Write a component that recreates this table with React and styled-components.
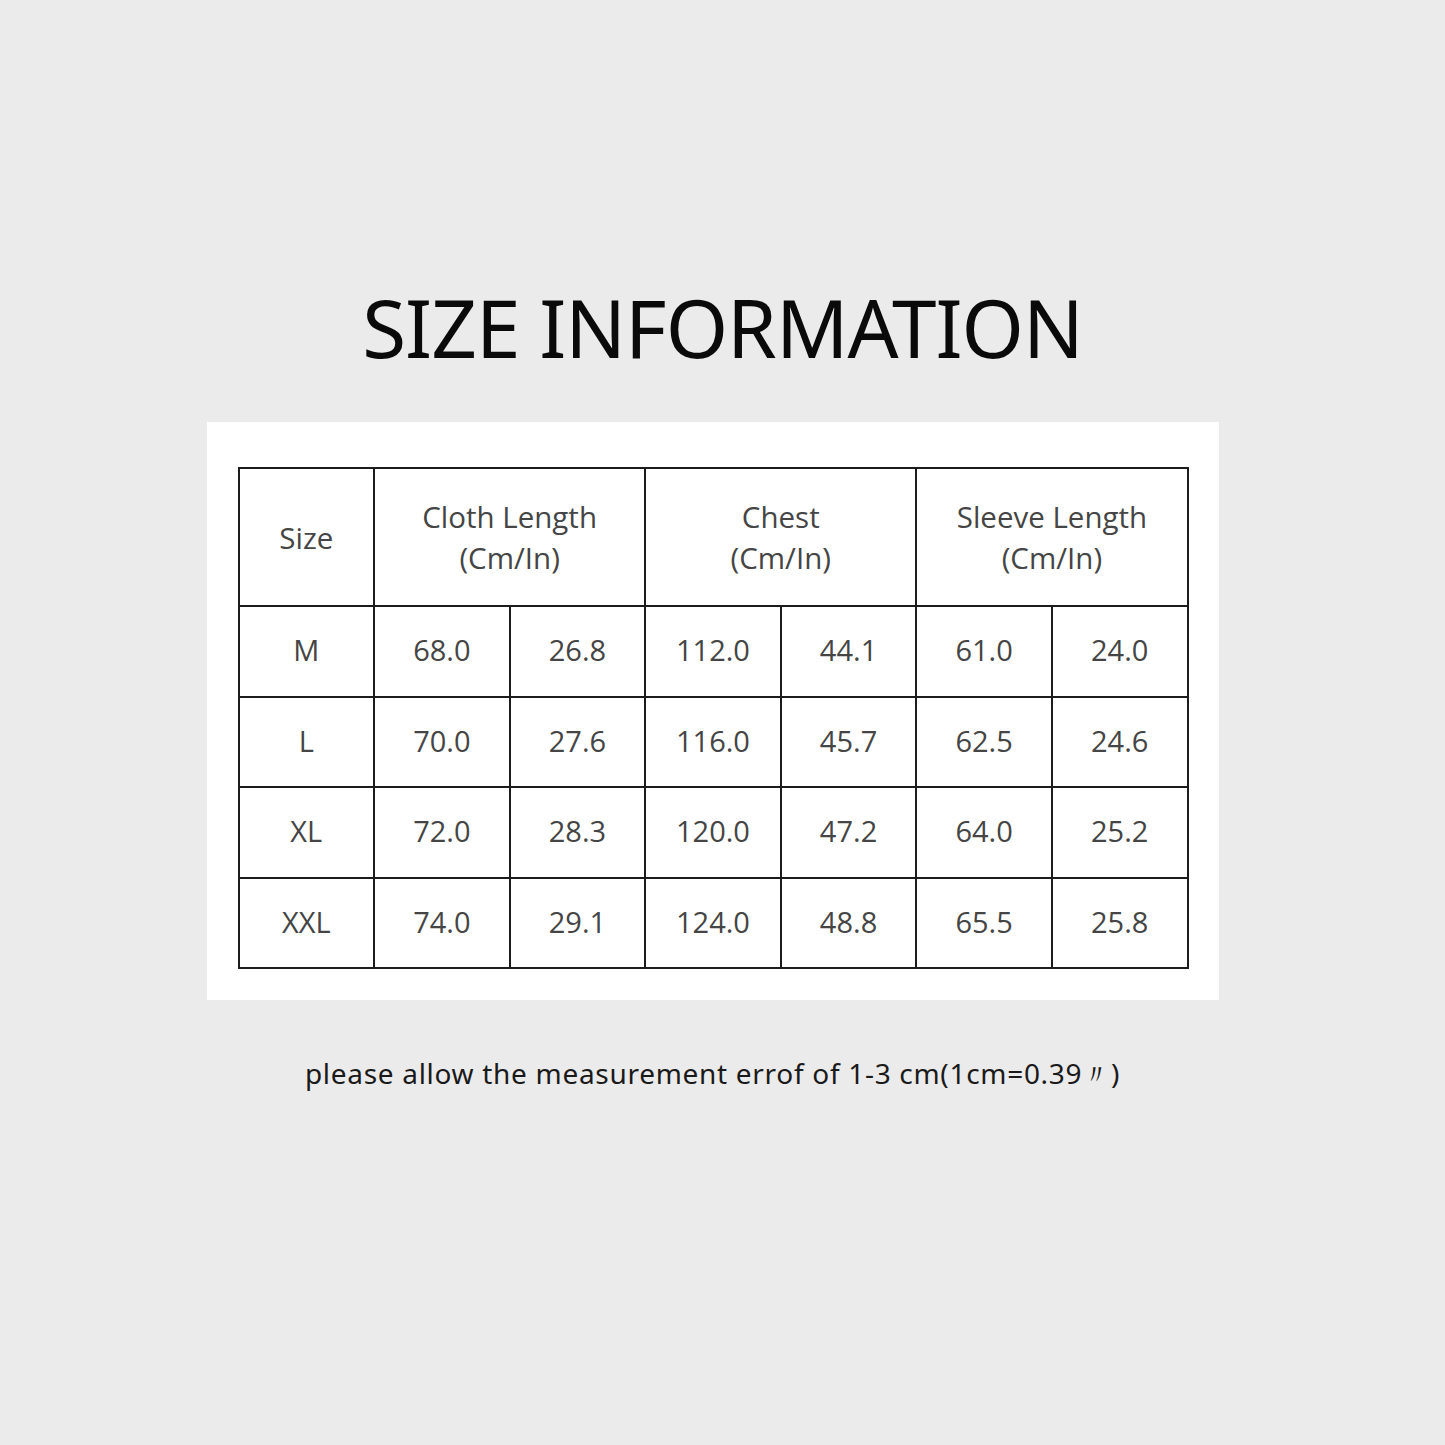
import React from 'react';
import styled, { createGlobalStyle } from 'styled-components';

const GlobalStyle = createGlobalStyle`
	html, body {
		margin: 0;
		padding: 0;
		background: #ebebeb;
	}
`;

const Page = styled.div`
	width: 1445px;
	height: 1445px;
	display: flex;
	flex-direction: column;
	align-items: center;
	box-sizing: border-box;
	padding-top: 287px;
	font-family: 'Noto Sans', 'Open Sans', sans-serif;
`;

const Title = styled.h1`
	margin: 0;
	font-family: 'Noto Sans', sans-serif;
	font-weight: 400;
	font-size: 80px;
	line-height: 80px;
	color: #0a0a0a;
	letter-spacing: -1px;
	white-space: nowrap;
`;

const Panel = styled.div`
	margin: 55px 20px 0 0;
	width: 1012px;
	background: #fff;
	box-sizing: border-box;
	padding: 45px 30px 31px 31px;
`;

const Table = styled.table`
	border-collapse: collapse;
	width: 951px;
	table-layout: fixed;
	font-family: 'Open Sans', 'Noto Sans', sans-serif;
	color: #454545;
`;

const Cell = styled.td`
	border: 2px solid #1c1c1c;
	text-align: center;
	vertical-align: middle;
	padding: ${({ head }) => (head ? '0' : '0 0 3px')};
	font-size: ${({ head }) => (head ? '29.5px' : '29px')};
	height: ${({ head }) => (head ? '136px' : '85.5px')};
	line-height: 41px;
`;

const Note = styled.p`
	margin: 54px 20px 0 0;
	font-family: 'Noto Sans', sans-serif;
	font-size: 28px;
	letter-spacing: 0.7px;
	color: #1a1a1a;
	white-space: nowrap;
`;

const rows = [
	['M', '68.0', '26.8', '112.0', '44.1', '61.0', '24.0'],
	['L', '70.0', '27.6', '116.0', '45.7', '62.5', '24.6'],
	['XL', '72.0', '28.3', '120.0', '47.2', '64.0', '25.2'],
	['XXL', '74.0', '29.1', '124.0', '48.8', '65.5', '25.8'],
];

const headers = ['Cloth Length', 'Chest', 'Sleeve Length'];

export default function App() {
	return (
		<Page>
			<GlobalStyle />
			<Title>SIZE INFORMATION</Title>
			<Panel>
				<Table>
					<colgroup>
						{[0, 1, 2, 3, 4, 5, 6].map(i => (
							<col key={i} />
						))}
					</colgroup>
					<tbody>
						<tr>
							<Cell head>Size</Cell>
							{headers.map(h => (
								<Cell head colSpan={2} key={h}>
									{h}
									<br />
									(Cm/In)
								</Cell>
							))}
						</tr>
						{rows.map(row => (
							<tr key={row[0]}>
								{row.map((v, idx) => (
									<Cell key={idx}>{v}</Cell>
								))}
							</tr>
						))}
					</tbody>
				</Table>
			</Panel>
			<Note>please allow the measurement errof of 1-3 cm(1cm=0.39〃)</Note>
		</Page>
	);
}
